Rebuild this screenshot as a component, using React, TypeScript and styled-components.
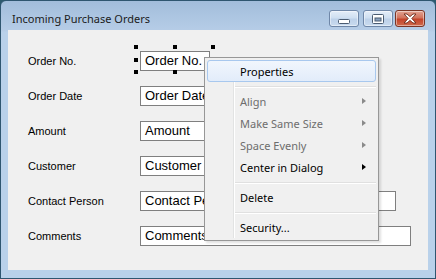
import React from 'react';
import styled, { createGlobalStyle, css } from 'styled-components';

const GlobalStyle = createGlobalStyle`
  html, body {
    margin: 0;
    padding: 0;
    background: #2d5a6e;
  }
  body {
    font-family: "Liberation Sans", Arial, sans-serif;
  }
`;

const Window = styled.div`
  width: 436px;
  height: 279px;
  box-sizing: border-box;
  border: 1px solid #2f5670;
  border-radius: 6px 6px 0 0;
  background: linear-gradient(#a2bddb 0px, #b6cde7 30px, #b9d1ea 31px);
  display: flex;
  flex-direction: column;
  padding: 0 7px 8px 7px;
`;

const TitleBar = styled.div`
  height: 29px;
  display: flex;
  align-items: flex-start;
  justify-content: space-between;
  padding: 0 3px 0 4px;
`;

const Title = styled.span`
  font-family: "Noto Sans", sans-serif;
  font-size: 11px;
  line-height: 15px;
  color: #1b1b1b;
  margin-top: 10px;
`;

const CaptionButtons = styled.div`
  display: flex;
  margin-top: 9px;
`;

const CaptionButton = styled.div<{ $close?: boolean; $gap?: number }>`
  width: 30px;
  height: 17px;
  box-sizing: border-box;
  margin-left: ${(p) => p.$gap ?? 0}px;
  border-radius: 3px;
  border: 1px solid ${(p) => (p.$close ? '#7a3526' : '#6f87a8')};
  background: ${(p) =>
    p.$close
      ? 'linear-gradient(#e2a393 0%, #d2735d 45%, #c4432a 55%, #cf6a4c 100%)'
      : 'linear-gradient(#e4edf8 0%, #cfdff1 45%, #bdd1e9 55%, #c9dbef 100%)'};
  box-shadow: inset 0 0 0 1px rgba(255, 255, 255, 0.45);
  display: flex;
  align-items: center;
  justify-content: center;
`;

const Client = styled.div`
  flex: 1;
  position: relative;
  background: #f0f0f0;
  padding: 21px 0 0 20px;
  display: flex;
  flex-direction: column;
  gap: 15px;
`;

const Row = styled.div`
  display: grid;
  grid-template-columns: 112px auto;
  align-items: center;
  height: 20px;
`;

const Label = styled.span`
  font-size: 11px;
  color: #000;
`;

const TextBox = styled.div<{ $w: number }>`
  position: relative;
  width: ${(p) => p.$w}px;
  height: 20px;
  box-sizing: border-box;
  border: 1px solid #7f7f7f;
  background: #fff;
  font-size: 13px;
  line-height: 18px;
  padding-left: 4px;
  white-space: nowrap;
  overflow: hidden;
  color: #000;
`;

const Selection = styled.div`
  position: absolute;
  left: 126px;
  top: 15px;
  width: 81px;
  height: 29px;
  pointer-events: none;
`;

const Handle = styled.span<{ $h: 0 | 1 | 2; $v: 0 | 1 | 2 }>`
  position: absolute;
  width: 4px;
  height: 4px;
  background: #000;
  left: ${(p) => ['0px', 'calc(50% - 2px)', 'calc(100% - 4px)'][p.$h]};
  top: ${(p) => ['0px', 'calc(50% - 2px)', 'calc(100% - 4px)'][p.$v]};
`;

const Menu = styled.div`
  position: absolute;
  left: 196px;
  top: 27px;
  width: 175px;
  box-sizing: border-box;
  border: 1px solid #979797;
  background: #f0f0f0;
  padding: 2px;
  font-family: "Noto Sans", sans-serif;
  font-size: 11px;
  box-shadow: 2px 2px 2px rgba(0, 0, 0, 0.12);

  &::before {
    content: '';
    position: absolute;
    left: 28px;
    top: 2px;
    bottom: 2px;
    width: 1px;
    background: #e2e3e3;
    box-shadow: 1px 0 0 #fff;
  }
`;

const MenuItem = styled.div<{ $disabled?: boolean; $hot?: boolean }>`
  position: relative;
  height: 22px;
  box-sizing: border-box;
  display: flex;
  align-items: center;
  justify-content: space-between;
  padding: 0 9px 0 32px;
  color: ${(p) => (p.$disabled ? '#6d6d6d' : '#000')};
  border: 1px solid transparent;
  border-radius: 3px;
  ${(p) =>
    p.$hot &&
    css`
      border-color: #a8c8ee;
      background: linear-gradient(#f1f6fd, #e2ecfa);
      z-index: 1;
    `}
`;

const Arrow = styled.span<{ $disabled?: boolean }>`
  width: 0;
  height: 0;
  border-top: 3.5px solid transparent;
  border-bottom: 3.5px solid transparent;
  border-left: 4px solid ${(p) => (p.$disabled ? '#8a8a8a' : '#000')};
`;

const Separator = styled.div`
  height: 8px;
  display: flex;
  align-items: center;
  padding-left: 28px;

  &::after {
    content: '';
    flex: 1;
    height: 1px;
    background: #e0e0e0;
    box-shadow: 0 1px 0 #fff;
  }
`;

type Entry =
  | { kind: 'item'; text: string; disabled?: boolean; sub?: boolean; hot?: boolean }
  | { kind: 'sep' };

const menu: Entry[] = [
  { kind: 'item', text: 'Properties', hot: true },
  { kind: 'sep' },
  { kind: 'item', text: 'Align', disabled: true, sub: true },
  { kind: 'item', text: 'Make Same Size', disabled: true, sub: true },
  { kind: 'item', text: 'Space Evenly', disabled: true, sub: true },
  { kind: 'item', text: 'Center in Dialog', sub: true },
  { kind: 'sep' },
  { kind: 'item', text: 'Delete' },
  { kind: 'sep' },
  { kind: 'item', text: 'Security...' },
];

const fields = [
  { label: 'Order No.', w: 70 },
  { label: 'Order Date', w: 120 },
  { label: 'Amount', w: 120 },
  { label: 'Customer', w: 160 },
  { label: 'Contact Person', w: 256 },
  { label: 'Comments', w: 271 },
];

const MinGlyph = () => (
  <svg width="12" height="6" viewBox="0 0 12 6" style={{ marginTop: 6 }}>
    <rect x="0.5" y="0.5" width="11" height="4" rx="1" fill="#fff" stroke="#4b5c72" />
  </svg>
);

const MaxGlyph = () => (
  <svg width="12" height="10" viewBox="0 0 12 10">
    <rect x="0.5" y="0.5" width="11" height="9" rx="1" fill="#fff" stroke="#4b5c72" />
    <rect x="3" y="4" width="6" height="3" fill="#8aa2c0" stroke="#4b5c72" strokeWidth="1" />
  </svg>
);

const CloseGlyph = () => (
  <svg width="16" height="11" viewBox="0 0 16 11">
    <path
      d="M2 1 L5 1 L8 3.6 L11 1 L14 1 L9.8 5.5 L14 10 L11 10 L8 7.4 L5 10 L2 10 L6.2 5.5 Z"
      fill="#fff"
      stroke="#6b2a1c"
      strokeWidth="0.9"
      strokeLinejoin="round"
    />
  </svg>
);

export default function App() {
  return (
    <>
      <GlobalStyle />
      <Window>
        <TitleBar>
          <Title>Incoming Purchase Orders</Title>
          <CaptionButtons>
            <CaptionButton>
              <MinGlyph />
            </CaptionButton>
            <CaptionButton $gap={4}>
              <MaxGlyph />
            </CaptionButton>
            <CaptionButton $gap={2} $close>
              <CloseGlyph />
            </CaptionButton>
          </CaptionButtons>
        </TitleBar>
        <Client>
          {fields.map((f) => (
            <Row key={f.label}>
              <Label>{f.label}</Label>
              <TextBox $w={f.w}>{f.label}</TextBox>
            </Row>
          ))}
          <Selection>
            <Handle $h={0} $v={0} />
            <Handle $h={1} $v={0} />
            <Handle $h={2} $v={0} />
            <Handle $h={0} $v={1} />
            <Handle $h={2} $v={1} />
            <Handle $h={0} $v={2} />
            <Handle $h={1} $v={2} />
            <Handle $h={2} $v={2} />
          </Selection>
          <Menu>
            {menu.map((e, i) =>
              e.kind === 'sep' ? (
                <Separator key={i} />
              ) : (
                <MenuItem key={i} $disabled={e.disabled} $hot={e.hot}>
                  <span>{e.text}</span>
                  {e.sub && <Arrow $disabled={e.disabled} />}
                </MenuItem>
              )
            )}
          </Menu>
        </Client>
      </Window>
    </>
  );
}
